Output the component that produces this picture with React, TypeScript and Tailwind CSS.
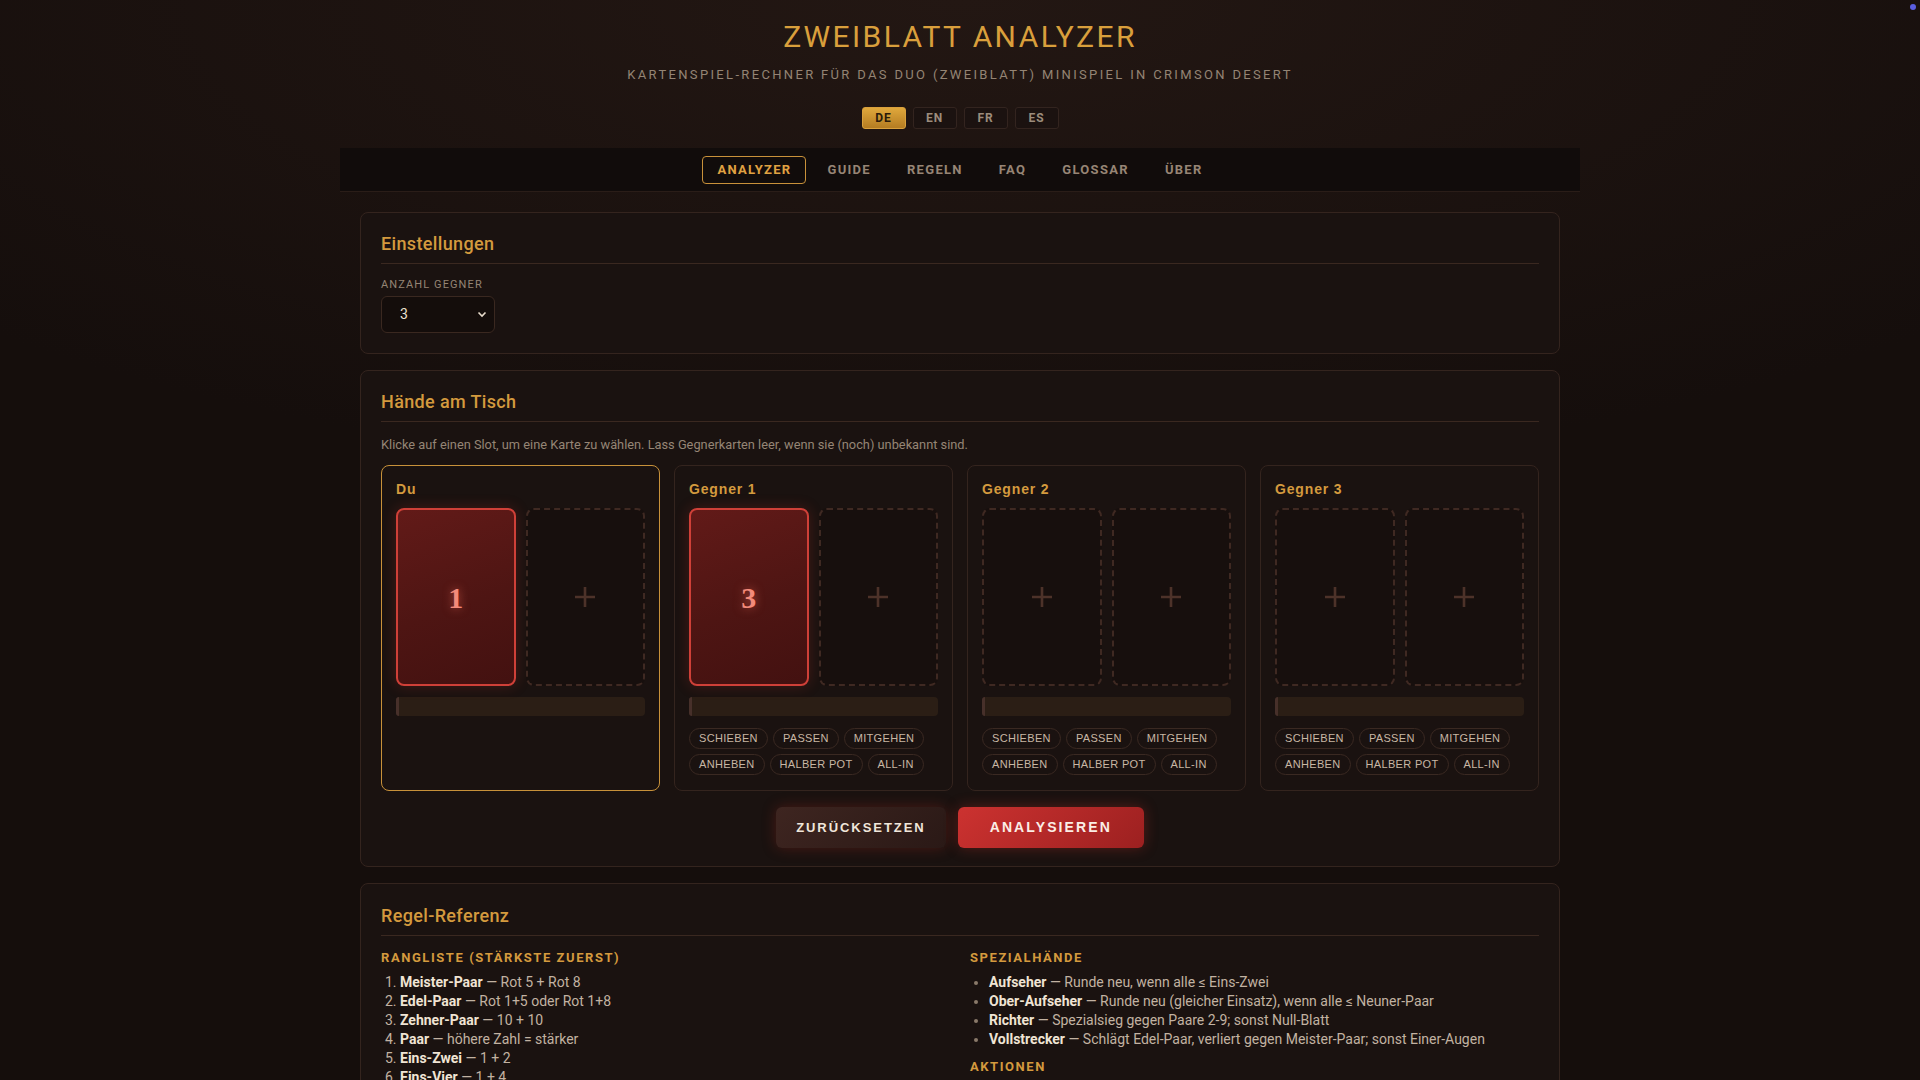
import { useState } from "react";

const LANGS = ["DE", "EN", "FR", "ES"];
const NAV = ["ANALYZER", "GUIDE", "REGELN", "FAQ", "GLOSSAR", "ÜBER"];
const ACTIONS = [
  ["SCHIEBEN", "PASSEN", "MITGEHEN"],
  ["ANHEBEN", "HALBER POT", "ALL-IN"],
];

const PLAYERS = [
  { name: "Du", cards: ["1", null], self: true },
  { name: "Gegner 1", cards: ["3", null], self: false },
  { name: "Gegner 2", cards: [null, null], self: false },
  { name: "Gegner 3", cards: [null, null], self: false },
];

const RANKING = [
  { b: "Meister-Paar", t: "Rot 5 + Rot 8" },
  { b: "Edel-Paar", t: "Rot 1+5 oder Rot 1+8" },
  { b: "Zehner-Paar", t: "10 + 10" },
  { b: "Paar", t: "höhere Zahl = stärker" },
  { b: "Eins-Zwei", t: "1 + 2" },
  { b: "Eins-Vier", t: "1 + 4" },
  { b: "Eins-Neun", t: "1 + 9" },
  { b: "Eins-Zehn", t: "1 + 10" },
];

const SPECIALS = [
  { b: "Aufseher", t: "Runde neu, wenn alle ≤ Eins-Zwei" },
  { b: "Ober-Aufseher", t: "Runde neu (gleicher Einsatz), wenn alle ≤ Neuner-Paar" },
  { b: "Richter", t: "Spezialsieg gegen Paare 2-9; sonst Null-Blatt" },
  { b: "Vollstrecker", t: "Schlägt Edel-Paar, verliert gegen Meister-Paar; sonst Einer-Augen" },
];

const ACTION_RULES = [
  { b: "Schieben", t: "Einsatz weitergeben, ohne zu erhöhen" },
  { b: "Passen", t: "Hand aufgeben" },
  { b: "Mitgehen", t: "aktuellen Einsatz bezahlen" },
];

function Slot({ value }: { value: string | null }) {
  if (value) {
    return (
      <div className="h-[178px] rounded-lg border-2 border-[#cf4038] bg-[linear-gradient(160deg,#621a18_0%,#4e1513_55%,#431110_100%)] shadow-[0_0_14px_rgba(200,50,40,0.25)] flex items-center justify-center cursor-pointer">
        <span className="font-['Liberation_Serif',serif] font-bold text-[30px] text-[#f38a7a] [text-shadow:0_0_10px_rgba(240,110,90,0.6)]">
          {value}
        </span>
      </div>
    );
  }
  return (
    <div className="h-[178px] rounded-lg border-2 border-dashed border-[#3f2922] bg-[#170f0d] flex items-center justify-center cursor-pointer">
      <svg width="24" height="24" viewBox="0 0 24 24">
        <path d="M12 2v20M2 12h20" stroke="#4d3229" strokeWidth="2.6" />
      </svg>
    </div>
  );
}

function PlayerCard({ p }: { p: (typeof PLAYERS)[number] }) {
  return (
    <div
      className={`rounded-lg border px-[14px] pt-[14px] pb-[15px] ${
        p.self ? "border-[#c8913a] bg-[#1a1210]" : "border-[#34241e] bg-[#1a1210]"
      }`}
    >
      <div className="font-['Liberation_Sans',Arial,sans-serif] font-bold text-[14px] leading-[18px] tracking-[0.06em] text-[#d49a3e]">
        {p.name}
      </div>
      <div className="grid grid-cols-2 gap-[10px] mt-[10px]">
        {p.cards.map((c, i) => (
          <Slot key={i} value={c} />
        ))}
      </div>
      <div className="mt-[11px] h-[19px] rounded-sm bg-[#2b1e15] flex">
        <div className="w-[3px] h-full rounded-l-sm bg-[#47302a]" />
      </div>
      {!p.self && (
        <div className="mt-[12px] flex flex-col gap-[5px]">
          {ACTIONS.map((row, ri) => (
            <div key={ri} className="flex gap-[5px]">
              {row.map((a) => (
                <button
                  key={a}
                  className="h-[21px] px-[9px] rounded-full border border-[#3a2922] bg-[#1a1210] font-['Liberation_Sans',Arial,sans-serif] text-[11px] tracking-[0.03em] text-[#c8b7a4] leading-none"
                >
                  {a}
                </button>
              ))}
            </div>
          ))}
        </div>
      )}
    </div>
  );
}

function CardTitle({ children }: { children: string }) {
  return (
    <div className="pb-[7px] border-b border-[#3a2820]">
      <h2 className="text-[18px] leading-[24px] font-medium tracking-[0.02em] text-[#d49a3e]">{children}</h2>
    </div>
  );
}

export default function App() {
  const [lang, setLang] = useState("DE");
  const [tab, setTab] = useState("ANALYZER");
  const [count, setCount] = useState("3");

  return (
    <div className="relative min-h-screen bg-[#150e0c] bg-[radial-gradient(ellipse_70%_40%_at_50%_0%,#231713_0%,#150e0c_100%)] font-['Roboto','Noto_Sans',sans-serif] text-[#c8b8a8]">
      {/* stray indicator dot */}
      <div className="absolute top-[4px] right-[4px] w-[6px] h-[6px] rounded-full bg-[#5a5ee0]" />

      <div className="w-[1240px] mx-auto">
        {/* Header */}
        <header className="pt-[19px] text-center">
          <h1 className="text-[30px] leading-[36px] font-normal tracking-[0.08em] text-[#d99f3c]">
            ZWEIBLATT ANALYZER
          </h1>
          <p className="mt-[11px] text-[13px] leading-[18px] tracking-[0.18em] text-[#948474]">
            KARTENSPIEL-RECHNER FÜR DAS DUO (ZWEIBLATT) MINISPIEL IN CRIMSON DESERT
          </p>
          <div className="mt-[23px] flex justify-center gap-[7px]">
            {LANGS.map((l) => (
              <button
                key={l}
                onClick={() => setLang(l)}
                className={`w-[44px] h-[22px] rounded-[3px] border text-[12px] font-bold tracking-[0.08em] leading-none ${
                  lang === l
                    ? "border-[#d9a03c] bg-[linear-gradient(180deg,#e0a83c,#b47c22)] text-[#2a1a0a]"
                    : "border-[#33241f] bg-[#1b1210] text-[#9c8c7c]"
                }`}
              >
                {l}
              </button>
            ))}
          </div>
        </header>

        {/* Nav */}
        <nav className="mt-[19px] h-[44px] bg-[#110c0b] border-b border-[#2a1d18] flex items-center justify-center gap-[6px]">
          {NAV.map((n) => (
            <button
              key={n}
              onClick={() => setTab(n)}
              className={`h-[28px] px-[14px] rounded-[4px] border text-[13px] font-bold tracking-[0.1em] leading-none ${
                tab === n ? "border-[#c8913a] text-[#e0a242]" : "border-transparent text-[#978575]"
              }`}
            >
              {n}
            </button>
          ))}
        </nav>

        <main className="px-[20px] pt-[20px] pb-[40px] flex flex-col gap-[16px]">
          {/* Einstellungen */}
          <section className="rounded-lg border border-[#34241e] bg-[#1a1210] px-[20px] pt-[19px] pb-[20px]">
            <CardTitle>Einstellungen</CardTitle>
            <label className="block mt-[14px] text-[11px] leading-[14px] tracking-[0.1em] text-[#948474]">
              ANZAHL GEGNER
            </label>
            <div className="relative mt-[4px] w-[114px]">
              <select
                value={count}
                onChange={(e) => setCount(e.target.value)}
                className="appearance-none w-full h-[37px] rounded-md border border-[#3a2820] bg-[#140d0b] pl-[18px] text-[14px] text-[#ece0d0] outline-none"
              >
                <option>1</option>
                <option>2</option>
                <option>3</option>
              </select>
              <svg
                className="absolute right-[8px] top-[15px] pointer-events-none"
                width="10"
                height="7"
                viewBox="0 0 10 7"
              >
                <path d="M1.5 1.5L5 5l3.5-3.5" stroke="#e8dccc" strokeWidth="1.6" fill="none" />
              </svg>
            </div>
          </section>

          {/* Hände am Tisch */}
          <section className="rounded-lg border border-[#34241e] bg-[#1a1210] px-[20px] pt-[19px] pb-[18px]">
            <CardTitle>Hände am Tisch</CardTitle>
            <p className="mt-[15px] text-[12.8px] leading-[16px] text-[#958575]">
              Klicke auf einen Slot, um eine Karte zu wählen. Lass Gegnerkarten leer, wenn sie (noch) unbekannt sind.
            </p>
            <div className="mt-[12px] grid grid-cols-4 gap-[14px]">
              {PLAYERS.map((p) => (
                <PlayerCard key={p.name} p={p} />
              ))}
            </div>
            <div className="mt-[16px] flex justify-center gap-[12px] font-['Liberation_Sans',Arial,sans-serif]">
              <button className="h-[41px] px-[20px] rounded-md bg-[linear-gradient(135deg,#3e2520,#2a1916)] shadow-[0_0_14px_rgba(160,40,30,0.35)] text-[13px] font-bold tracking-[0.15em] text-[#f0e6da]">
                ZURÜCKSETZEN
              </button>
              <button className="h-[41px] px-[32px] rounded-md bg-[linear-gradient(135deg,#cc3230,#9c2020)] shadow-[0_0_14px_rgba(200,50,40,0.35)] text-[14px] font-bold tracking-[0.15em] text-[#fbeee6]">
                ANALYSIEREN
              </button>
            </div>
          </section>

          {/* Regel-Referenz */}
          <section className="rounded-lg border border-[#34241e] bg-[#1a1210] px-[20px] pt-[20px] pb-[20px]">
            <CardTitle>Regel-Referenz</CardTitle>
            <div className="mt-[14px] grid grid-cols-2 gap-[20px]">
              <div>
                <h3 className="text-[13px] leading-[16px] font-bold tracking-[0.12em] text-[#d49a3e]">
                  RANGLISTE (STÄRKSTE ZUERST)
                </h3>
                <ol className="mt-[7px] list-decimal pl-[19px] text-[14px] leading-[19px] text-[#c2b2a2]">
                  {RANKING.map((r) => (
                    <li key={r.b}>
                      <b className="text-[#f0e4d4]">{r.b}</b> — {r.t}
                    </li>
                  ))}
                </ol>
              </div>
              <div>
                <h3 className="text-[13px] leading-[16px] font-bold tracking-[0.12em] text-[#d49a3e]">
                  SPEZIALHÄNDE
                </h3>
                <ul className="mt-[7px] list-disc pl-[19px] text-[14px] leading-[19px] text-[#c2b2a2] marker:text-[#8a7a6a]">
                  {SPECIALS.map((r) => (
                    <li key={r.b}>
                      <b className="text-[#f0e4d4]">{r.b}</b> — {r.t}
                    </li>
                  ))}
                </ul>
                <h3 className="mt-[10px] text-[13px] leading-[16px] font-bold tracking-[0.12em] text-[#d49a3e]">
                  AKTIONEN
                </h3>
                <ul className="mt-[7px] list-disc pl-[19px] text-[14px] leading-[19px] text-[#c2b2a2] marker:text-[#8a7a6a]">
                  {ACTION_RULES.map((r) => (
                    <li key={r.b}>
                      <b className="text-[#f0e4d4]">{r.b}</b> — {r.t}
                    </li>
                  ))}
                </ul>
              </div>
            </div>
          </section>
        </main>
      </div>
    </div>
  );
}
